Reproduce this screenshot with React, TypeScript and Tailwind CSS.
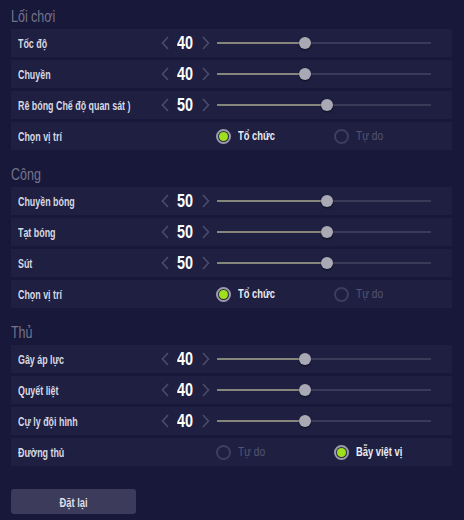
import { FC } from "react";

type SliderRow = { kind: "slider"; label: string; value: number };
type RadioRow = {
  kind: "radio";
  label: string;
  options: string[];
  selected: number;
};
type Row = SliderRow | RadioRow;

const sections: { title: string; rows: Row[] }[] = [
  {
    title: "Lối chơi",
    rows: [
      { kind: "slider", label: "Tốc độ", value: 40 },
      { kind: "slider", label: "Chuyền", value: 40 },
      { kind: "slider", label: "Rê bóng Chế độ quan sát )", value: 50 },
      { kind: "radio", label: "Chọn vị trí", options: ["Tổ chức", "Tự do"], selected: 0 },
    ],
  },
  {
    title: "Công",
    rows: [
      { kind: "slider", label: "Chuyền bóng", value: 50 },
      { kind: "slider", label: "Tạt bóng", value: 50 },
      { kind: "slider", label: "Sút", value: 50 },
      { kind: "radio", label: "Chọn vị trí", options: ["Tổ chức", "Tự do"], selected: 0 },
    ],
  },
  {
    title: "Thủ",
    rows: [
      { kind: "slider", label: "Gây áp lực", value: 40 },
      { kind: "slider", label: "Quyết liệt", value: 40 },
      { kind: "slider", label: "Cự ly đội hình", value: 40 },
      { kind: "radio", label: "Đường thủ", options: ["Tự do", "Bẫy việt vị"], selected: 1 },
    ],
  },
];

// the game font is a narrow condensed face; squeeze Liberation Sans to match
const Chevron: FC<{ dir: "left" | "right" }> = ({ dir }) => (
  <svg width="8" height="14" viewBox="0 0 8 14" fill="none">
    <path
      d={dir === "left" ? "M7 1 L1.5 7 L7 13" : "M1 1 L6.5 7 L1 13"}
      stroke="#4b4b6a"
      strokeWidth="1.6"
    />
  </svg>
);

const Slider: FC<{ value: number }> = ({ value }) => (
  <div className="relative h-[12px] w-[214px]">
    <div className="absolute left-0 right-0 top-[5px] h-[2px] bg-[#3b3b59]" />
    <div
      className="absolute left-0 top-[5px] h-[2px] bg-[#86867d]"
      style={{ width: `${value * 2.2}px` }}
    />
    <div
      className="absolute top-0 h-[12px] w-[12px] -translate-x-1/2 rounded-full bg-[#a9a9b6] shadow-[0_1px_2px_rgba(0,0,0,0.6)]"
      style={{ left: `${value * 2.2}px` }}
    />
  </div>
);

const Radio: FC<{ label: string; on: boolean }> = ({ label, on }) => (
  <div className="flex w-[118px] items-center gap-[7px]">
    {on ? (
      <div className="flex h-[15px] w-[15px] items-center justify-center rounded-full border-[2px] border-[#9c9ca8] bg-[#2a2a44]">
        <div className="h-[9px] w-[9px] rounded-full bg-[#9de01b]" />
      </div>
    ) : (
      <div className="h-[15px] w-[15px] rounded-full border-[2px] border-[#3e3e5c]" />
    )}
    <span
      className={
        on
          ? "inline-block origin-left scale-x-[0.72] whitespace-nowrap text-[13px] font-bold text-[#ececf2]"
          : "inline-block origin-left scale-x-[0.78] whitespace-nowrap text-[13px] text-[#545472]"
      }
    >
      {label}
    </span>
  </div>
);

export default function App() {
  return (
    <div className="flex h-[520px] w-[464px] flex-col bg-[#17183a] px-[11px] pt-[5px] font-['Liberation_Sans',Arial,sans-serif]">
      {sections.map((section, si) => (
        <div key={section.title} className={si > 0 ? "mt-[13px]" : ""}>
          <div className="flex h-[24px] items-center">
            <span className="inline-block origin-left scale-x-[0.78] text-[16px] text-[#75758a]">
              {section.title}
            </span>
          </div>
          <div className="flex flex-col gap-[3px]">
            {section.rows.map((row, ri) => (
              <div key={ri} className="flex h-[28px] w-[441px] items-center bg-[#1f2041] pl-[7px]">
                <div className="w-[141px] whitespace-nowrap">
                  <span className="inline-block origin-left scale-x-[0.74] text-[12px] font-bold text-[#d9d9e2]">
                    {row.label}
                  </span>
                </div>
                {row.kind === "slider" ? (
                  <>
                    <div className="flex w-[51px] items-center justify-between pl-[2px]">
                      <Chevron dir="left" />
                      <span className="inline-block scale-x-[0.8] text-[18px] font-bold leading-none text-white">
                        {row.value}
                      </span>
                      <Chevron dir="right" />
                    </div>
                    <div className="ml-[7px]">
                      <Slider value={row.value} />
                    </div>
                  </>
                ) : (
                  <div className="ml-[58px] flex items-center">
                    {row.options.map((opt, oi) => (
                      <Radio key={opt} label={opt} on={oi === row.selected} />
                    ))}
                  </div>
                )}
              </div>
            ))}
          </div>
        </div>
      ))}
      <button className="mt-[23px] h-[25px] w-[125px] rounded-[3px] bg-[#3d3b5b] text-[#dedee6]">
        <span className="inline-block scale-x-[0.72] text-[13px] font-bold">Đặt lại</span>
      </button>
    </div>
  );
}
